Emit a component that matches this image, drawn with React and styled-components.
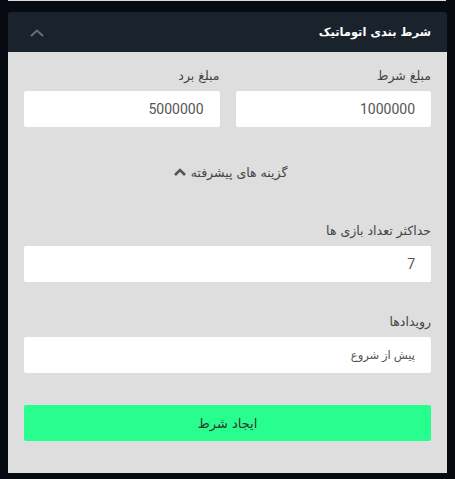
import React from 'react';
import styled, { createGlobalStyle } from 'styled-components';

const GlobalStyle = createGlobalStyle`
  html, body {
    margin: 0;
    padding: 0;
    background-color: #070b11;
  }
  * {
    box-sizing: border-box;
  }
`;

const Page = styled.div`
  padding: 0 8px;
  height: 479px;
  font-family: Roboto, "DejaVu Sans", sans-serif;
`;

const TopEdge = styled.div`
  height: 1px;
  margin-right: 1px;
  background-color: #dcdcdc;
`;

const Panel = styled.section`
  margin-top: 11px;
  direction: rtl;
`;

const Header = styled.div`
  height: 40px;
  display: flex;
  align-items: center;
  justify-content: space-between;
  padding: 0 16px 0 22px;
  background-color: #1a232b;
  border-radius: 3px 3px 0 0;
`;

const Title = styled.h3`
  margin: 0;
  font-family: "DejaVu Sans", sans-serif;
  font-size: 11.5px;
  font-weight: bold;
  color: #ffffff;
`;

const Collapse = styled.button`
  display: flex;
  padding: 0;
  margin-top: 2px;
  border: none;
  background: none;
  cursor: pointer;
`;

const Body = styled.div`
  background-color: #dedede;
  padding: 14px 16px 32px;
`;

const Row = styled.div`
  display: grid;
  grid-template-columns: 1fr 1fr;
  gap: 16px;
`;

const Field = styled.div`
  margin-top: ${(p) => p.$top || 0}px;
`;

const Label = styled.label`
  display: block;
  height: 20px;
  line-height: 20px;
  margin-bottom: 5px;
  font-family: "DejaVu Sans", sans-serif;
  font-size: 12.5px;
  color: #444;
`;

const Input = styled.input`
  display: block;
  width: 100%;
  height: 36px;
  padding: 0 16px;
  border: none;
  border-radius: 2px;
  background-color: #ffffff;
  color: #555;
  font-family: Roboto, "DejaVu Sans", sans-serif;
  font-size: ${(p) => p.$size || 14}px;
  text-align: right;
  direction: rtl;
  outline: none;
`;

const Toggle = styled.button`
  display: flex;
  align-items: center;
  justify-content: center;
  gap: 5px;
  margin: 35px auto 0;
  height: 20px;
  padding: 0 0 0 6px;
  border: none;
  background: none;
  font-family: "DejaVu Sans", sans-serif;
  font-size: 12.5px;
  color: #444;
  cursor: pointer;
`;

const Submit = styled.button`
  display: block;
  width: 100%;
  height: 36px;
  margin-top: 32px;
  border: none;
  border-radius: 2px;
  background-color: #27fe8e;
  color: #333;
  font-family: "DejaVu Sans", sans-serif;
  font-size: 13px;
  cursor: pointer;
`;

const ThinChevron = () => (
  <svg width="14" height="8" viewBox="0 0 14 8">
    <path d="M1 7 L7 1.5 L13 7" fill="none" stroke="#66707a" strokeWidth="2" />
  </svg>
);

const BoldChevron = () => (
  <svg width="12" height="8" viewBox="0 0 12 8">
    <path d="M1 7 L6 2 L11 7" fill="none" stroke="#555" strokeWidth="2.6" />
  </svg>
);

export default function App() {
  return (
    <Page>
      <GlobalStyle />
      <TopEdge />
      <Panel>
        <Header>
          <Title>شرط بندی اتوماتیک</Title>
          <Collapse aria-label="collapse">
            <ThinChevron />
          </Collapse>
        </Header>
        <Body>
          <Row>
            <Field>
              <Label>مبلغ شرط</Label>
              <Input defaultValue="1000000" />
            </Field>
            <Field>
              <Label>مبلغ برد</Label>
              <Input defaultValue="5000000" />
            </Field>
          </Row>
          <Toggle>
            <span>گزینه های پیشرفته</span>
            <BoldChevron />
          </Toggle>
          <Field $top={39}>
            <Label>حداکثر تعداد بازی ها</Label>
            <Input defaultValue="7" />
          </Field>
          <Field $top={30}>
            <Label>رویدادها</Label>
            <Input $size={11.5} defaultValue="پیش از شروع" />
          </Field>
          <Submit>ایجاد شرط</Submit>
        </Body>
      </Panel>
    </Page>
  );
}
